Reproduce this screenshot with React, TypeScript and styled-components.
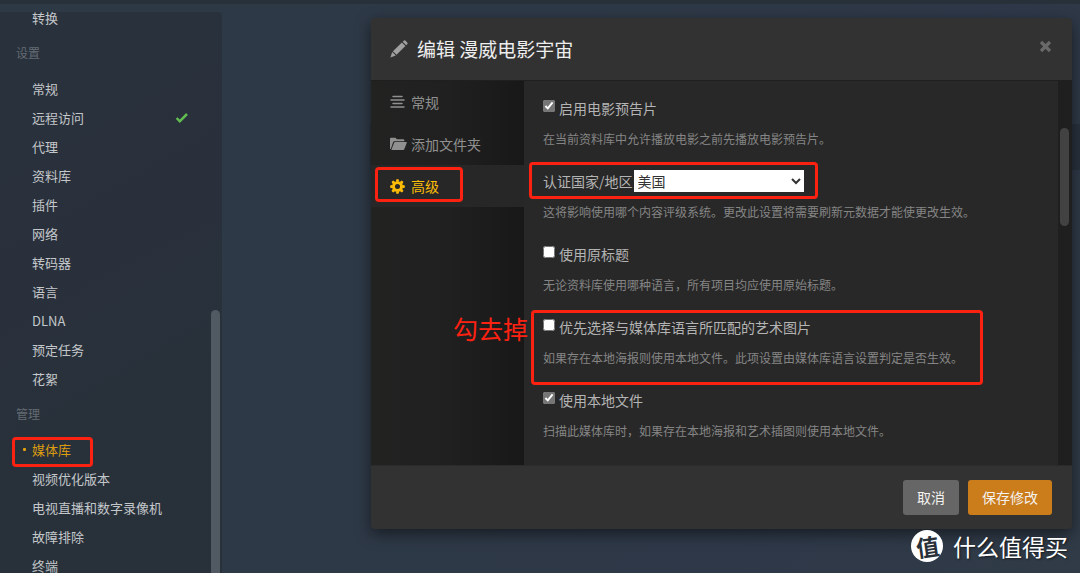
import React from "react";
import styled, { createGlobalStyle, css } from "styled-components";

const FONT = '"Noto Sans CJK SC", sans-serif';
const RED = "#fb2212";

const GlobalStyle = createGlobalStyle`
  *, *::before, *::after { box-sizing: border-box; }
  body {
    margin: 0;
    background: #2d3946;
    font-family: ${FONT};
    overflow: hidden;
  }
  ul, p, h1, h2 { margin: 0; padding: 0; }
  ul { list-style: none; }
  button, select, input { font-family: inherit; margin: 0; }
`;

const Page = styled.div`
  position: relative;
  display: flex;
  flex-direction: column;
  height: 100vh;
  overflow: hidden;
  background: linear-gradient(115deg, #2d3945 0%, #2e3947 50%, #2e3848 75%, #303b47 100%);
`;

const TopBar = styled.header`
  flex: none;
  height: 4px;
  background: #28303a;
`;

const Columns = styled.div`
  flex: 1;
  min-height: 0;
  display: flex;
  padding-top: 8px;
`;

const Sidebar = styled.nav`
  flex: none;
  display: flex;
  width: 222px;
  border-top-right-radius: 4px;
  background: linear-gradient(150deg, #29323c 0%, #29303c 40%, #28313a 70%);
`;

const SidebarScroll = styled.div`
  flex: 1;
  margin-top: -9px;
`;

const SidebarRail = styled.div`
  flex: none;
  width: 9px;
  margin: 298px 2px 0 0;
  border-radius: 5px 5px 0 0;
  background: #515962;
`;

const SidebarHeading = styled.h2`
  padding-left: 16px;
  font-size: 12px;
  font-weight: 400;
  line-height: 42px;
  color: #646b73;
`;

const frame = css<{ $frame?: string }>`
  ${({ $frame }) =>
    $frame &&
    css`
      position: relative;
      &::after {
        content: "";
        position: absolute;
        inset: ${$frame};
        border: 3px solid ${RED};
        border-radius: 4px;
        pointer-events: none;
      }
    `}
`;

const SidebarItem = styled.li<{ $active?: boolean; $frame?: string }>`
  display: flex;
  align-items: center;
  justify-content: space-between;
  height: 29px;
  padding: 0 22px 0 32px;
  ${frame}
  ${({ $active }) =>
    $active &&
    css`
      &::before {
        content: "";
        position: absolute;
        left: 23px;
        width: 3px;
        height: 3px;
        border-radius: 1px;
        background: #e5a00d;
      }
    `}
`;

const SidebarLink = styled.a<{ $active?: boolean }>`
  font-size: 13px;
  line-height: 29px;
  white-space: nowrap;
  text-decoration: none;
  color: ${({ $active }) => ($active ? "#dc9c10" : "#c4c7ca")};
`;

const MainPane = styled.main`
  flex: 1;
  padding-top: 112px;
`;

const LibraryRow = styled.div`
  height: 46px;
  margin-left: 148px;
  background: #28313d;
`;

const Overlay = styled.div`
  position: absolute;
  inset: 0;
  display: flex;
  padding: 18px 8px 44px 371px;
`;

const Dialog = styled.section`
  flex: 1;
  min-width: 0;
  display: flex;
  flex-direction: column;
  border-radius: 4px;
  background: #323232;
  box-shadow: 0 5px 15px rgba(0, 0, 0, 0.5);
`;

const DialogHeader = styled.header`
  flex: none;
  display: flex;
  align-items: center;
  gap: 9px;
  height: 62px;
  padding: 0 20px 0 19px;
`;

const DialogTitle = styled.h1`
  flex: 1;
  font-size: 19px;
  font-weight: 400;
  line-height: 28px;
  color: #eeeeee;
`;

const CloseButton = styled.button`
  display: flex;
  padding: 0;
  border: 0;
  background: none;
  color: #696969;
  margin-bottom: 6px;
`;

const DialogBody = styled.div`
  flex: 1;
  min-height: 0;
  display: flex;
  overflow: hidden;
  border-top: 1px solid #1f1f1f;
  background: #282828;
`;

const TabList = styled.ul`
  flex: none;
  width: 153px;
  background: linear-gradient(90deg, #222221 0%, #202020 50%, #181818 100%);
`;

const Tab = styled.li<{ $active?: boolean; $frame?: string }>`
  background: ${({ $active }) => ($active ? "#272727" : "none")};
  ${frame}
`;

const TabButton = styled.button<{ $active?: boolean }>`
  display: flex;
  align-items: center;
  gap: 4px;
  width: 100%;
  height: 42px;
  padding: 0 0 0 19px;
  border: 0;
  background: none;
  font-size: 14px;
  line-height: 20px;
  color: ${({ $active }) => ($active ? "#fdbd06" : "#909090")};
`;

const TabIcon = styled.span`
  display: flex;
  width: 17px;
`;

const Form = styled.form`
  flex: 1;
  min-width: 0;
  display: flex;
  flex-direction: column;
  gap: 19px;
  padding: 14px 0 0 19px;
`;

const Field = styled.div`
  position: relative;
  display: flex;
  flex-direction: column;
  gap: 9px;
`;

const FieldRow = styled.div<{ $frame?: string; $tight?: boolean }>`
  display: flex;
  align-items: center;
  align-self: flex-start;
  gap: ${({ $tight }) => ($tight ? "1px" : "4px")};
  height: 25px;
  ${frame}
`;

const FieldGroup = styled.div<{ $frame?: string }>`
  display: flex;
  flex-direction: column;
  align-self: flex-start;
  gap: 9px;
  ${frame}
`;

const FieldLabel = styled.label`
  font-size: 14px;
  line-height: 24px;
  white-space: nowrap;
  color: #b4b4b4;
`;

const Checkbox = styled.input`
  width: 12px;
  height: 12px;
  margin-bottom: 3px;
  accent-color: #767676;
`;

const Help = styled.p`
  font-size: 12px;
  line-height: 20px;
  white-space: nowrap;
  color: #858585;
`;

const Select = styled.select`
  width: 170px;
  height: 22px;
  padding: 0;
  border: 0;
  border-radius: 0;
  background: #ffffff;
  font-size: 14px;
  line-height: 22px;
  color: #333333;
`;

const Note = styled.span`
  position: absolute;
  right: 100%;
  top: 0;
  margin-right: 15px;
  font-size: 25px;
  line-height: 28px;
  white-space: nowrap;
  color: ${RED};
`;

const FormRail = styled.div`
  flex: none;
  width: 14px;
  padding: 47px 3px 0 2px;
  background: #1f1f1f;
`;

const FormThumb = styled.div`
  height: 98px;
  border-radius: 5px;
  background: #424242;
`;

const DialogFooter = styled.footer`
  flex: none;
  display: flex;
  align-items: center;
  justify-content: flex-end;
  gap: 9px;
  height: 64px;
  padding-right: 20px;
  border-top: 1px solid #2b2b2b;
`;

const ActionButton = styled.button<{ $primary?: boolean }>`
  height: 35px;
  padding: 0 14px;
  border: 0;
  border-radius: 3px;
  background: ${({ $primary }) => ($primary ? "#cb7c1b" : "#666666")};
  font-size: 14px;
  line-height: 35px;
  color: #f4f2ef;
`;

const Watermark = styled.div`
  position: absolute;
  right: 12px;
  bottom: 11px;
  display: flex;
  align-items: center;
  gap: 10px;
  font-size: 23px;
  line-height: 32px;
  color: #ffffff;
  text-shadow: 1px 1px 2px rgba(0, 0, 0, 0.6);
`;

const WatermarkBadge = styled.span`
  display: flex;
  align-items: center;
  justify-content: center;
  width: 32px;
  height: 32px;
  border-radius: 50%;
  background: #ffffff;
  color: #28303a;
  font-weight: 700;
  text-shadow: none;
`;

const BadgeGlyph = styled.span`
  transform: rotate(-8deg);
`;

const CheckIcon = () => (
  <svg width="14" height="12" viewBox="0 0 14 12" aria-hidden="true">
    <path d="M1.6 6l3.2 3.3L12 2" fill="none" stroke="#62bd50" strokeWidth="2.5" />
  </svg>
);

const PencilIcon = () => (
  <svg width="18" height="18" viewBox="0 0 18 18" fill="#a0a0a0" aria-hidden="true">
    <path d="M.4 17.4l1.8-5.3 3.6 3.4zM2.9 11.2l9-8.6 3.5 3.4-8.9 8.7zM12.7 1.8L14 .6q.7-.5 1.3 0L17.4 2.7q.6.6 0 1.3L16.2 5.2z" />
  </svg>
);

const LinesIcon = () => (
  <svg width="15" height="14" viewBox="0 0 15 14" aria-hidden="true">
    <path
      d="M3 1.500h9M1 5h13M3 8.500h9M1 12h13"
      fill="none"
      stroke="currentColor"
      strokeWidth="1.500"
      strokeLinecap="round"
    />
  </svg>
);

const FolderIcon = () => (
  <svg width="17" height="14" viewBox="0 0 17 14" fill="currentColor" aria-hidden="true">
    <path d="M0 12V1.8Q0 .8 1 .8h4.200q.6 0 .9.5l.6 1h6.600q1 0 1 1v.9H4.500q-1 0-1.400 1L.9 11.800z" />
    <path d="M1.300 13L4.100 5.700q.3-.7 1-.7H16.200q.9 0 .6.8L14.300 12.300q-.3.7-1 .7z" />
  </svg>
);

const GearIcon = () => (
  <svg width="15" height="15" viewBox="-8 -8 16 16" aria-hidden="true">
    <circle r="4.200" fill="none" stroke="currentColor" strokeWidth="3" />
    {[0, 45, 90, 135, 180, 225, 270, 315].map((angle) => (
      <path
        key={angle}
        d="M-1.800-5L-1.200-7.800H1.200L1.800-5z"
        fill="currentColor"
        transform={`rotate(${angle})`}
      />
    ))}
  </svg>
);

const CloseIcon = () => (
  <svg width="13" height="13" viewBox="0 0 13 13" aria-hidden="true">
    <path d="M2 2l9 9M11 2l-9 9" stroke="currentColor" strokeWidth="3.200" />
  </svg>
);

const SETTINGS = [
  "常规",
  "远程访问",
  "代理",
  "资料库",
  "插件",
  "网络",
  "转码器",
  "语言",
  "DLNA",
  "预定任务",
  "花絮",
];

const MANAGE = ["媒体库", "视频优化版本", "电视直播和数字录像机", "故障排除", "终端"];

interface CheckFieldProps {
  id: string;
  label: string;
  help: string;
  checked?: boolean;
  frame?: string;
  note?: string;
}

const CheckField = ({ id, label, help, checked, frame: inset, note }: CheckFieldProps) => (
  <Field>
    {note && <Note>{note}</Note>}
    <FieldGroup $frame={inset}>
      <FieldRow>
        <Checkbox type="checkbox" id={id} defaultChecked={checked} />
        <FieldLabel htmlFor={id}>{label}</FieldLabel>
      </FieldRow>
      <Help>{help}</Help>
    </FieldGroup>
  </Field>
);

export default function App() {
  return (
    <Page>
      <GlobalStyle />
      <TopBar />
      <Columns>
        <Sidebar>
          <SidebarScroll>
            <ul>
              <SidebarItem>
                <SidebarLink href="#convert">转换</SidebarLink>
              </SidebarItem>
            </ul>
            <SidebarHeading>设置</SidebarHeading>
            <ul>
              {SETTINGS.map((name) => (
                <SidebarItem key={name}>
                  <SidebarLink href="#settings">{name}</SidebarLink>
                  {name === "远程访问" && <CheckIcon />}
                </SidebarItem>
              ))}
            </ul>
            <SidebarHeading>管理</SidebarHeading>
            <ul>
              {MANAGE.map((name, i) => (
                <SidebarItem
                  key={name}
                  $active={i === 0}
                  $frame={i === 0 ? "2px 118px -3px 12px" : undefined}
                >
                  <SidebarLink href="#manage" $active={i === 0}>
                    {name}
                  </SidebarLink>
                </SidebarItem>
              ))}
            </ul>
          </SidebarScroll>
          <SidebarRail />
        </Sidebar>
        <MainPane>
          <LibraryRow />
        </MainPane>
      </Columns>

      <Overlay>
        <Dialog role="dialog" aria-labelledby="dialog-title">
          <DialogHeader>
            <PencilIcon />
            <DialogTitle id="dialog-title">编辑 漫威电影宇宙</DialogTitle>
            <CloseButton type="button" aria-label="关闭">
              <CloseIcon />
            </CloseButton>
          </DialogHeader>
          <DialogBody>
            <TabList>
              <Tab>
                <TabButton type="button">
                  <TabIcon>
                    <LinesIcon />
                  </TabIcon>
                  常规
                </TabButton>
              </Tab>
              <Tab>
                <TabButton type="button">
                  <TabIcon>
                    <FolderIcon />
                  </TabIcon>
                  添加文件夹
                </TabButton>
              </Tab>
              <Tab $active $frame="2px 61px 5px 4px">
                <TabButton type="button" $active>
                  <TabIcon>
                    <GearIcon />
                  </TabIcon>
                  高级
                </TabButton>
              </Tab>
            </TabList>
            <Form>
              <CheckField
                id="trailers"
                label="启用电影预告片"
                help="在当前资料库中允许播放电影之前先播放电影预告片。"
                checked
              />
              <Field>
                <FieldRow $tight $frame="-6px -14px">
                  <FieldLabel htmlFor="country">认证国家/地区</FieldLabel>
                  <Select id="country" defaultValue="us">
                    <option value="us">美国</option>
                  </Select>
                </FieldRow>
                <Help>这将影响使用哪个内容评级系统。更改此设置将需要刷新元数据才能使更改生效。</Help>
              </Field>
              <CheckField
                id="original-title"
                label="使用原标题"
                help="无论资料库使用哪种语言，所有项目均应使用原始标题。"
              />
              <CheckField
                id="artwork-language"
                label="优先选择与媒体库语言所匹配的艺术图片"
                help="如果存在本地海报则使用本地文件。此项设置由媒体库语言设置判定是否生效。"
                frame="-4px -20px -17px -12px"
                note="勾去掉"
              />
              <CheckField
                id="local-assets"
                label="使用本地文件"
                help="扫描此媒体库时，如果存在本地海报和艺术插图则使用本地文件。"
                checked
              />
            </Form>
            <FormRail>
              <FormThumb />
            </FormRail>
          </DialogBody>
          <DialogFooter>
            <ActionButton type="button">取消</ActionButton>
            <ActionButton type="button" $primary>
              保存修改
            </ActionButton>
          </DialogFooter>
        </Dialog>
      </Overlay>

      <Watermark>
        <WatermarkBadge>
          <BadgeGlyph>值</BadgeGlyph>
        </WatermarkBadge>
        什么值得买
      </Watermark>
    </Page>
  );
}
